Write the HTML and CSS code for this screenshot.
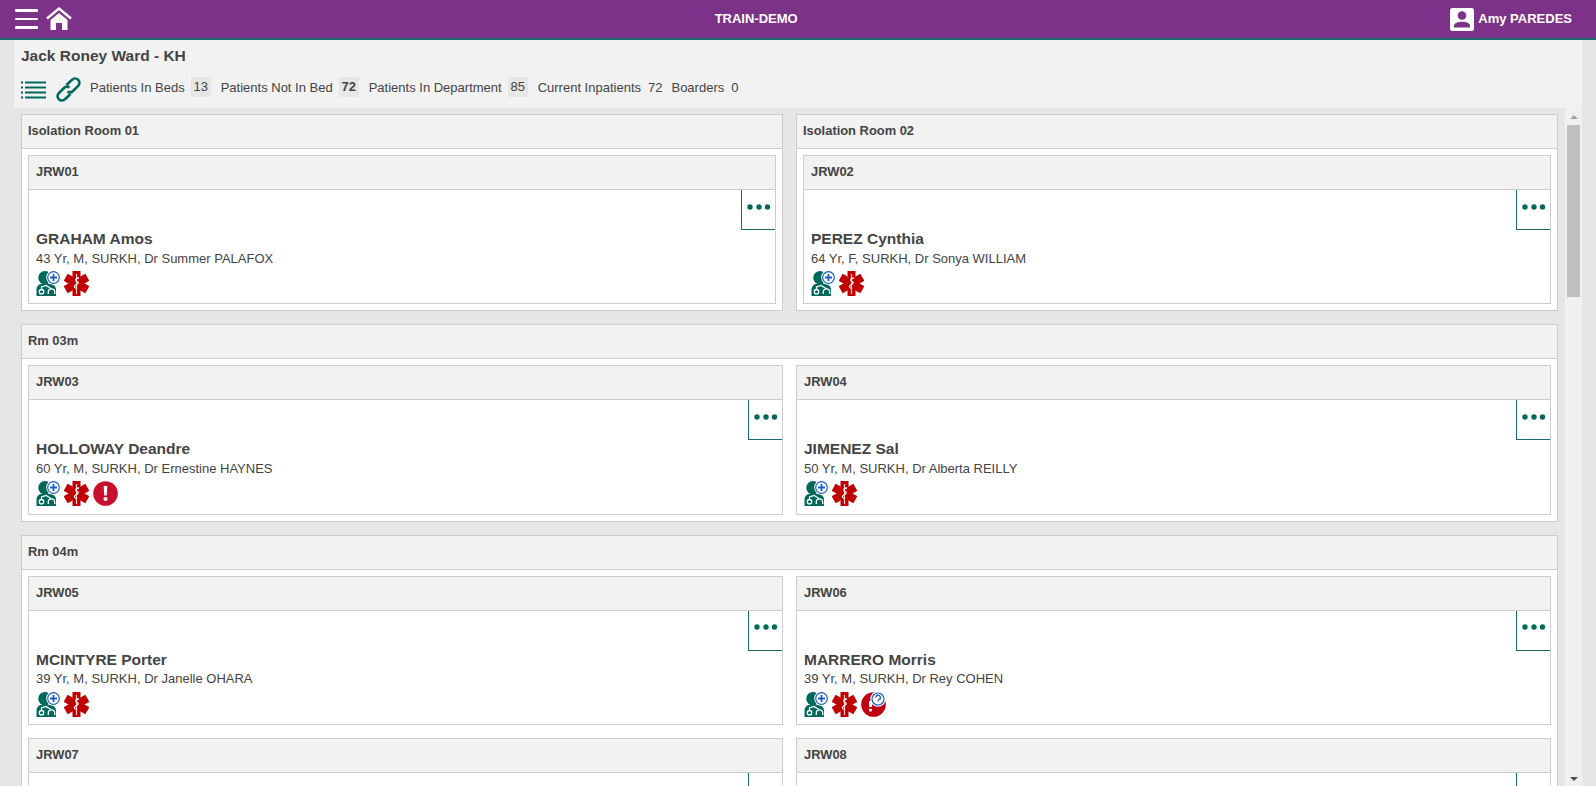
FILE: index.html
```html
<!DOCTYPE html>
<html lang="en">
<head>
  <meta charset="UTF-8">
  <title>Jack Roney Ward - KH</title>
  <link rel="stylesheet" href="styles.css">
</head>
<body>
  <!-- shared icons -->
  <svg class="defs" width="0" height="0">
    <symbol id="i-doc" viewBox="0 0 24 25">
      <circle cx="9" cy="6.800" r="6.800" fill="#00695c"/>
      <path d="M0.500 25v-6.500c0-3 2-5.500 5-5.500h8.500c3.500 0 6 2.500 6 5.500v6.500z" fill="#00695c"/>
      <circle cx="5.500" cy="20.700" r="2.200" fill="none" stroke="#fff" stroke-width="1.300"/>
      <path d="M12.300 23v-2a3.200 3.200 0 0 1 6.400 0v2" fill="none" stroke="#fff" stroke-width="1.300"/>
      <path d="M5.500 18.500v-2.500l4.500-1.500 5.500 3.300" fill="none" stroke="#fff" stroke-width="1.200"/>
      <circle cx="17.500" cy="6.500" r="7.300" fill="#fff"/>
      <circle cx="17.500" cy="6.500" r="5.800" fill="#fff" stroke="#1c5fc0" stroke-width="1.200"/>
      <path d="M17.500 3v7M14 6.500h7" stroke="#1c5fc0" stroke-width="1.800"/>
    </symbol>
    <symbol id="i-star" viewBox="0 0 25 25">
      <g fill="#c00000">
        <rect x="8.500" y="0" width="8" height="25"/>
        <rect x="8.500" y="0" width="8" height="25" transform="rotate(60 12.500 12.500)"/>
        <rect x="8.500" y="0" width="8" height="25" transform="rotate(120 12.500 12.500)"/>
      </g>
      <path d="M12.500 3v20" stroke="#f3c9c9" stroke-width="1.200"/>
      <path d="M15 7c-3 0-4 2-2.500 3s3 2 0 3.500-2.500 3 0 4" fill="none" stroke="#fff" stroke-width="1.300"/>
    </symbol>
    <symbol id="i-alert" viewBox="0 0 25 25">
      <circle cx="12.500" cy="12.500" r="12.300" fill="#c8102e"/>
      <path d="M10.700 5h3.600l-.6 9.500h-2.400z" fill="#fff"/>
      <circle cx="12.500" cy="18" r="2" fill="#fff"/>
    </symbol>
    <symbol id="i-query" viewBox="0 0 25 25">
      <circle cx="12.500" cy="12.500" r="12.300" fill="#c00010"/>
      <circle cx="17" cy="7" r="7.800" fill="#fff"/>
      <circle cx="17" cy="7" r="6" fill="#fff" stroke="#1c5fc0" stroke-width="1.200"/>
      <path d="M14.800 5.500a2.300 2.300 0 1 1 3.400 2c-1 .6-1.200 1-1.200 2" fill="none" stroke="#1c5fc0" stroke-width="1.400"/>
      <rect x="8" y="9" width="3" height="6" fill="#fff"/>
      <circle cx="9.500" cy="18" r="1.600" fill="#fff"/>
    </symbol>
    <symbol id="i-dots" viewBox="0 0 24 6">
      <circle cx="3" cy="3" r="2.700"/>
      <circle cx="12" cy="3" r="2.700"/>
      <circle cx="20.500" cy="3" r="2.700"/>
    </symbol>
  </svg>

  <header class="topbar">
    <div class="topbar-left">
      <div class="burger"><span></span><span></span><span></span></div>
      <svg class="home" viewBox="0 0 26 23" width="26" height="23">
        <path d="M1 11.500 13 1.500l12 10" fill="none" stroke="#fff" stroke-width="2.400"/>
        <path d="M4.500 13 13 6l8.500 7v10H16v-7h-6v7H4.500z" fill="#fff"/>
      </svg>
    </div>
    <div class="topbar-title">TRAIN-DEMO</div>
    <div class="user">
      <svg class="user-icon" viewBox="0 0 24 23" width="24" height="23">
        <rect width="24" height="23" rx="2.500" fill="#fff"/>
        <circle cx="12" cy="7.500" r="4.300" fill="#7c3288"/>
        <path d="M4 19.500v-1.800c0-2.600 4-3.900 8-3.900s8 1.300 8 3.900v1.800z" fill="#7c3288"/>
      </svg>
      <span class="user-name">Amy PAREDES</span>
    </div>
  </header>

  <div class="shell">
    <div class="ward-head">
      <h1>Jack Roney Ward - KH</h1>
      <div class="stats">
        <svg class="list-icon" viewBox="0 0 25 18" width="25" height="18">
          <path d="M0 1.500h2M4 1.500h21M0 6.500h2M4 6.500h21M0 11.500h2M4 11.500h21M0 16.500h2M4 16.500h21" stroke="#00695c" stroke-width="2"/>
        </svg>
        <svg class="link-icon" viewBox="0 0 25 25" width="25" height="25">
          <g fill="none" stroke="#00695c" stroke-width="2.600">
            <path d="M10.500 8 16 2.800a4.300 4.300 0 0 1 6.200 6L17 14a4.300 4.300 0 0 1-5.500.5"/>
            <path d="M14.500 17 9 22.200a4.300 4.300 0 0 1-6.200-6L8 11a4.300 4.300 0 0 1 5.500-.5"/>
          </g>
        </svg>
        <span class="stat">Patients In Beds</span><span class="chip">13</span>
        <span class="stat">Patients Not In Bed</span><span class="chip chip-bold">72</span>
        <span class="stat">Patients In Department</span><span class="chip">85</span>
        <span class="stat">Current Inpatients</span><span class="plain">72</span>
        <span class="stat">Boarders</span><span class="plain">0</span>
      </div>
    </div>

    <div class="ward-body">
      <main class="rooms">
        <div class="room-row">
          <section class="panel">
            <div class="panel-head">Isolation Room 01</div>
            <div class="beds">
              <article class="bed">
                <div class="panel-head">JRW01</div>
                <div class="bed-body">
                  <button class="more"><svg><use href="#i-dots"/></svg></button>
                  <h2>GRAHAM Amos</h2>
                  <p>43 Yr, M, SURKH, Dr Summer PALAFOX</p>
                  <div class="flags">
                    <svg class="flag-doc"><use href="#i-doc"/></svg>
                    <svg class="flag"><use href="#i-star"/></svg>
                  </div>
                </div>
              </article>
            </div>
          </section>
          <section class="panel">
            <div class="panel-head">Isolation Room 02</div>
            <div class="beds">
              <article class="bed">
                <div class="panel-head">JRW02</div>
                <div class="bed-body">
                  <button class="more"><svg><use href="#i-dots"/></svg></button>
                  <h2>PEREZ Cynthia</h2>
                  <p>64 Yr, F, SURKH, Dr Sonya WILLIAM</p>
                  <div class="flags">
                    <svg class="flag-doc"><use href="#i-doc"/></svg>
                    <svg class="flag"><use href="#i-star"/></svg>
                  </div>
                </div>
              </article>
            </div>
          </section>
        </div>

        <section class="panel">
          <div class="panel-head">Rm 03m</div>
          <div class="beds beds-two">
            <article class="bed">
              <div class="panel-head">JRW03</div>
              <div class="bed-body">
                <button class="more"><svg><use href="#i-dots"/></svg></button>
                <h2>HOLLOWAY Deandre</h2>
                <p>60 Yr, M, SURKH, Dr Ernestine HAYNES</p>
                <div class="flags">
                  <svg class="flag-doc"><use href="#i-doc"/></svg>
                  <svg class="flag"><use href="#i-star"/></svg>
                  <svg class="flag"><use href="#i-alert"/></svg>
                </div>
              </div>
            </article>
            <article class="bed">
              <div class="panel-head">JRW04</div>
              <div class="bed-body">
                <button class="more"><svg><use href="#i-dots"/></svg></button>
                <h2>JIMENEZ Sal</h2>
                <p>50 Yr, M, SURKH, Dr Alberta REILLY</p>
                <div class="flags">
                  <svg class="flag-doc"><use href="#i-doc"/></svg>
                  <svg class="flag"><use href="#i-star"/></svg>
                </div>
              </div>
            </article>
          </div>
        </section>

        <section class="panel">
          <div class="panel-head">Rm 04m</div>
          <div class="beds beds-two">
            <article class="bed">
              <div class="panel-head">JRW05</div>
              <div class="bed-body">
                <button class="more"><svg><use href="#i-dots"/></svg></button>
                <h2>MCINTYRE Porter</h2>
                <p>39 Yr, M, SURKH, Dr Janelle OHARA</p>
                <div class="flags">
                  <svg class="flag-doc"><use href="#i-doc"/></svg>
                  <svg class="flag"><use href="#i-star"/></svg>
                </div>
              </div>
            </article>
            <article class="bed">
              <div class="panel-head">JRW06</div>
              <div class="bed-body">
                <button class="more"><svg><use href="#i-dots"/></svg></button>
                <h2>MARRERO Morris</h2>
                <p>39 Yr, M, SURKH, Dr Rey COHEN</p>
                <div class="flags">
                  <svg class="flag-doc"><use href="#i-doc"/></svg>
                  <svg class="flag"><use href="#i-star"/></svg>
                  <svg class="flag"><use href="#i-query"/></svg>
                </div>
              </div>
            </article>
            <article class="bed">
              <div class="panel-head">JRW07</div>
              <div class="bed-body">
                <button class="more more-faded"><svg><use href="#i-dots"/></svg></button>
              </div>
            </article>
            <article class="bed">
              <div class="panel-head">JRW08</div>
              <div class="bed-body">
                <button class="more more-faded"><svg><use href="#i-dots"/></svg></button>
              </div>
            </article>
          </div>
        </section>
      </main>

      <div class="scrollbar">
        <span class="arrow-up"></span>
        <span class="thumb"></span>
        <span class="arrow-down"></span>
      </div>
    </div>
  </div>
</body>
</html>
```

FILE: styles.css
```css
html, body {
  height: 100%;
}

body {
  margin: 0;
  height: 786px;
  overflow: hidden;
  display: flex;
  flex-direction: column;
  background: #e6e6e6;
  color: #444;
  font-family: "Liberation Sans", Arial, sans-serif;
}

.defs {
  position: absolute;
}

/* top bar */
.topbar {
  flex: none;
  height: 38px;
  display: flex;
  align-items: center;
  padding: 0 24px 0 15px;
  background: #7c3288;
  border-bottom: 2px solid #1a6b6b;
  color: #fff;
  font-size: 13px;
  font-weight: bold;
}

.topbar-left {
  display: flex;
  align-items: center;
  gap: 8px;
}

.burger {
  width: 23px;
  display: flex;
  flex-direction: column;
  gap: 6px;
}

.burger span {
  height: 2.500px;
  background: #fff;
  border-radius: 1px;
}

.home {
  margin-top: -1px;
}

.topbar-title {
  flex: 1;
  text-align: center;
  padding: 0 10px 2px 0;
}

.user {
  display: flex;
  align-items: center;
  gap: 4px;
}

.user-name {
  padding-bottom: 2px;
}

/* ward header */
.shell {
  flex: 1;
  min-height: 0;
  margin: 0 14px;
  display: flex;
  flex-direction: column;
  background: #f2f2f2;
}

.ward-head {
  flex: none;
  height: 68px;
  padding-left: 7px;
  box-sizing: border-box;
}

h1 {
  margin: 0;
  padding-top: 7px;
  font-size: 15.500px;
  line-height: 18px;
  font-weight: bold;
}

.stats {
  display: flex;
  align-items: center;
  height: 20px;
  margin-top: 12px;
  font-size: 13px;
}

.list-icon {
  margin-top: 6px;
}

.link-icon {
  margin: 4px 9px 0 10px;
}

.stat {
  white-space: nowrap;
}

.chip {
  min-width: 20px;
  height: 20px;
  margin: 0 10px 0 6px;
  background: #e6e6e6;
  line-height: 20px;
  text-align: center;
}

.chip-bold {
  font-weight: bold;
}

.plain {
  margin: 0 9px 0 7px;
}

/* ward body */
.ward-body {
  flex: 1;
  min-height: 0;
  display: flex;
  background: #e6e6e6;
}

.rooms {
  flex: 1;
  min-width: 0;
  padding: 6px 7px;
  display: flex;
  flex-direction: column;
  gap: 13px;
}

.room-row {
  display: grid;
  grid-template-columns: 1fr 1fr;
  gap: 13px;
}

.panel, .bed {
  border: 1px solid #ccc;
  background: #fff;
}

.panel-head {
  height: 33px;
  padding-left: 6px;
  background: #f2f2f2;
  border-bottom: 1px solid #ccc;
  font-size: 12.900px;
  font-weight: bold;
  line-height: 32.500px;
}

.bed .panel-head {
  padding-left: 7px;
}

.beds {
  padding: 6px;
}

.beds-two {
  display: grid;
  grid-template-columns: 1fr 1fr;
  gap: 12.500px 13px;
}

.bed-body {
  position: relative;
  height: 113.400px;
  box-sizing: border-box;
  padding: 40px 7px 0;
}

.more {
  position: absolute;
  top: 0;
  right: 0;
  width: 34px;
  height: 40px;
  padding: 0 0 6px;
  box-sizing: border-box;
  display: flex;
  align-items: center;
  justify-content: center;
  background: #fff;
  border: 0;
  border-left: 1px solid #1a6b6b;
  border-bottom: 1px solid #1a6b6b;
  fill: #00695c;
}

.more-faded {
  fill: #ccc;
}

.more svg {
  width: 24px;
  height: 6px;
}

h2 {
  margin: 0;
  font-size: 15.500px;
  line-height: 18px;
  font-weight: bold;
}

.bed-body p {
  margin: 1.500px 0 0;
  font-size: 13px;
  line-height: 17px;
}

.flags {
  display: flex;
  gap: 4px;
  margin-top: 4.500px;
}

.flag-doc {
  width: 24px;
  height: 25px;
}

.flag {
  width: 25px;
  height: 25px;
}

/* scrollbar */
.scrollbar {
  flex: none;
  width: 17px;
  display: flex;
  flex-direction: column;
  align-items: center;
  background: #f0f0f0;
}

.arrow-up {
  margin-top: 7px;
  border: 4px solid transparent;
  border-top: 0;
  border-bottom: 4px solid #a3a3a3;
}

.thumb {
  width: 13px;
  height: 172px;
  margin-top: 6px;
  background: #bfbfbf;
}

.arrow-down {
  margin-top: auto;
  margin-bottom: 5px;
  border: 4px solid transparent;
  border-bottom: 0;
  border-top: 4px solid #505050;
}
```
